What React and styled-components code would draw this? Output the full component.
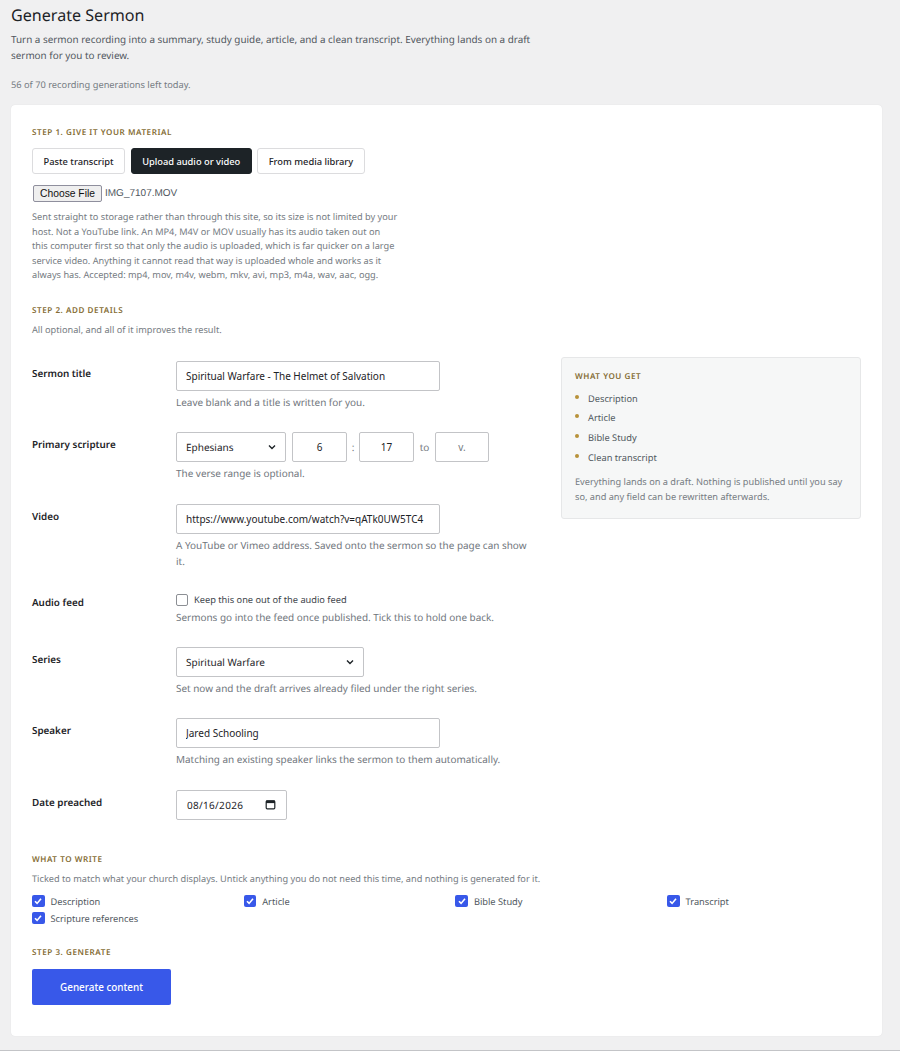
import React from "react";
import styled, { createGlobalStyle } from "styled-components";

const Global = createGlobalStyle`
  html, body { margin: 0; padding: 0; background: #f0f0f1; }
  body { font-family: "Noto Sans", "Open Sans", sans-serif; color: #1d2327; text-rendering: geometricPrecision; }
  * { box-sizing: border-box; }
`;
const Page = styled.div`
  height: 1051px; padding: 0 18px 0 11px; border-bottom: 1px solid #c3c4c7; overflow: hidden;
`;
const Title = styled.h1`
  margin: 0; padding-top: 3px; font-size: 16.1px; line-height: 24px; font-weight: 400; color: #1d2327;
`;
const Lead = styled.p`
  margin: 4px 0 0; width: 530px; font-size: 9.9px; line-height: 16px; color: #50575e;
`;
const Quota = styled.p`
  margin: 14px 0 0; font-size: 9.27px; line-height: 16px; color: #757b82;
`;
const Card = styled.main`
  margin-top: 12px; height: 931px; background: #fff; border-radius: 4px; padding: 22px 21px 0;
  box-shadow: 0 0 1px rgba(0,0,0,.12);
`;
const Eyebrow = styled.h2`
  margin: 0; font-size: 8.1px; line-height: 12px; font-weight: 600; letter-spacing: .55px;
  text-transform: uppercase; color: #856d35;
`;
const Tabs = styled.div`
  display: flex; gap: 5.5px; margin-top: 9px;
`;
const Tab = styled.button`
  height: 26px; padding: 0 10.5px; border-radius: 3px; font: 500 9.3px "Noto Sans", sans-serif;
  border: 1px solid ${p => (p.$active ? "#1d2327" : "#dcdcde")};
  background: ${p => (p.$active ? "#1d2327" : "#fff")};
  color: ${p => (p.$active ? "#fff" : "#1d2327")};
`;
const FileRow = styled.div`
  display: flex; align-items: center; gap: 3px; margin-top: 11px; font: 10px "Liberation Sans", sans-serif; color: #50575e;
`;
const ChooseButton = styled.button`
  height: 17px; width: 69px; padding: 0; margin-left: 1px; border: 1px solid #8f8f9d; border-radius: 2px; background: #efefef;
  font: 10.3px "Liberation Sans", sans-serif; color: #111;
`;
const Help = styled.p`
  margin: ${p => p.$mt || 4}px 0 0; width: ${p => p.$w || "auto"}; font-size: 9.2px; line-height: 14.6px; color: #757b82;
`;
const Section = styled.div`
  margin-top: ${p => p.$mt}px;
`;
const Columns = styled.div`
  display: grid; grid-template-columns: 497px 300px; column-gap: 32px; margin-top: 19px;
`;
const Fields = styled.div`
  display: flex; flex-direction: column; padding-top: 4px;
`;
const Row = styled.div`
  display: grid; grid-template-columns: 144px 1fr; min-height: ${p => p.$h}px;
`;
const Label = styled.label`
  font-size: 9.85px; line-height: 16px; font-weight: 600; color: #1d2327; padding-top: ${p => p.$pt ?? 4}px;
`;
const TextInput = styled.input`
  display: block; width: 264px; height: 30px; padding: 1px 9px 0; border: 1px solid #c3c4c7; border-radius: 2px;
  font: 10px "Noto Sans", sans-serif; color: #1d2327; background: #fff;
`;
const Hint = styled.p`
  margin: 3px 0 0; font-size: 9.95px; line-height: 16px; color: #6f757c;
`;
const ScriptureLine = styled.div`
  display: flex; align-items: center; height: 30px; font-size: 10px; color: #757b82;
`;
const SelectBox = styled.div`
  display: flex; align-items: center; justify-content: space-between; width: ${p => p.$w}px; height: 30px;
  padding: 0 8px 0 9px; border: 1px solid #c3c4c7; border-radius: 2px; font-size: 10px; color: #1d2327; background: #fff;
`;
const VerseInput = styled.input`
  width: ${p => p.$w || 55}px; height: 30px; margin-left: ${p => p.$ml || 0}px; border: 1px solid #c3c4c7; border-radius: 2px; text-align: center;
  font: 10px "Noto Sans", sans-serif; color: #1d2327; padding: 0;
  &::placeholder { color: #757b82; opacity: 1; }
`;
const Sep = styled.span`
  width: ${p => p.$w}px; text-align: center;
`;
const CheckLine = styled.label`
  display: flex; align-items: center; gap: 6px; height: 14px; margin: 1px 0 -1px; font-size: 9.25px; color: #3c434a;
`;
const EmptyBox = styled.span`
  width: 12px; height: 12px; border: 1px solid #8c8f94; border-radius: 2px; background: #fff;
`;
const DateBox = styled.div`
  display: flex; align-items: center; justify-content: space-between; width: 111px; height: 30px; padding: 0 10px;
  border: 1px solid #c3c4c7; border-radius: 2px; font-size: 10px; letter-spacing: .3px; color: #1d2327;
`;
const Aside = styled.aside`
  align-self: start; height: 162px; padding: 13px 13px; background: #f6f7f7;
  border: 1px solid #e6e7e8; border-radius: 3px;
`;
const AsideList = styled.ul`
  list-style: none; margin: 6px 0 0; padding: 0;
`;
const AsideItem = styled.li`
  position: relative; padding-left: 13px; height: 19.7px; font-size: 9.25px; line-height: 20px; color: #50575e;
  &::before { content: ""; position: absolute; left: 0; top: 6px; width: 4px; height: 4px; border-radius: 50%; background: #b8923a; }
`;
const AsideNote = styled.p`
  margin: 8px 0 0; font-size: 9.2px; line-height: 14.6px; color: #757b82;
`;
const OutputGrid = styled.div`
  display: grid; grid-template-columns: repeat(4, 211.7px); row-gap: 5px; margin-top: 9px;
`;
const OutputItem = styled.label`
  display: flex; align-items: center; gap: 6px; height: 12px; font-size: 9.25px; color: #50575e;
`;
const Tick = styled.span`
  display: inline-flex; align-items: center; justify-content: center; width: 12.5px; height: 12.5px; border-radius: 2px; background: #3858e9;
`;
const GenerateButton = styled.button`
  display: block; width: 139px; height: 36px; margin-top: 10px; border: 0; border-radius: 2px; background: #3858e9;
  color: #fff; font: 500 9.9px "Noto Sans", sans-serif;
`;

const CheckIcon = () => (
  <svg width="10" height="10" viewBox="0 0 10 10" fill="none"><path d="M2 5.2 4.1 7.4 8 2.8" stroke="#fff" strokeWidth="1.6" /></svg>
);
const Chevron = () => (
  <svg width="10" height="10" viewBox="0 0 10 10" fill="none"><path d="M2 3.6 5 6.6 8 3.6" stroke="#1d2327" strokeWidth="1.4" /></svg>
);

export default function App() {
  return (
    <>
      <Global />
      <Page>
        <Title>Generate Sermon</Title>
        <Lead>Turn a sermon recording into a summary, study guide, article, and a clean transcript. Everything lands on a draft sermon for you to review.</Lead>
        <Quota>56 of 70 recording generations left today.</Quota>
        <Card>
          <Eyebrow>Step 1. Give it your material</Eyebrow>
          <Tabs>
            <Tab>Paste transcript</Tab>
            <Tab $active>Upload audio or video</Tab>
            <Tab>From media library</Tab>
          </Tabs>
          <FileRow><ChooseButton>Choose File</ChooseButton>IMG_7107.MOV</FileRow>
          <Help $w="368px" $mt={8}>Sent straight to storage rather than through this site, so its size is not limited by your host. Not a YouTube link. An MP4, M4V or MOV usually has its audio taken out on<br />this computer first so that only the audio is uploaded, which is far quicker on a large service video. Anything it cannot read that way is uploaded whole and works as it always has. Accepted: mp4, mov, m4v, webm, mkv, avi, mp3, m4a, wav, aac, ogg.</Help>
          <Section $mt={22}>
            <Eyebrow>Step 2. Add details</Eyebrow>
            <Help $mt={6}>All optional, and all of it improves the result.</Help>
            <Columns>
              <Fields>
                <Row $h={71.5}>
                  <Label>Sermon title</Label>
                  <div><TextInput readOnly value="Spiritual Warfare - The Helmet of Salvation" /><Hint>Leave blank and a title is written for you.</Hint></div>
                </Row>
                <Row $h={71.5}>
                  <Label>Primary scripture</Label>
                  <div>
                    <ScriptureLine>
                      <SelectBox $w={110}>Ephesians<Chevron /></SelectBox>
                      <VerseInput $ml={6} readOnly value="6" />
                      <Sep $w={12}>:</Sep>
                      <VerseInput readOnly value="17" />
                      <Sep $w={21}>to</Sep>
                      <VerseInput $w={54} readOnly placeholder="v." />
                    </ScriptureLine>
                    <Hint>The verse range is optional.</Hint>
                  </div>
                </Row>
                <Row $h={88}>
                  <Label>Video</Label>
                  <div><TextInput readOnly value="https://www.youtube.com/watch?v=qATk0UW5TC4" /><Hint>A YouTube or Vimeo address. Saved onto the sermon so the page can show it.</Hint></div>
                </Row>
                <Row $h={55}>
                  <Label $pt={2}>Audio feed</Label>
                  <div><CheckLine><EmptyBox />Keep this one out of the audio feed</CheckLine><Hint>Sermons go into the feed once published. Tick this to hold one back.</Hint></div>
                </Row>
                <Row $h={71}>
                  <Label>Series</Label>
                  <div>
                    <SelectBox $w={188}>Spiritual Warfare<Chevron /></SelectBox>
                    <Hint>Set now and the draft arrives already filed under the right series.</Hint>
                  </div>
                </Row>
                <Row $h={72}>
                  <Label>Speaker</Label>
                  <div><TextInput readOnly value="Jared Schooling" /><Hint>Matching an existing speaker links the sermon to them automatically.</Hint></div>
                </Row>
                <Row $h={64}>
                  <Label>Date preached</Label>
                  <DateBox>08/16/2026
                    <svg width="11" height="11" viewBox="0 0 11 11" fill="none"><rect x="1.2" y="1.8" width="8.6" height="8" rx="1" stroke="#1d2327" strokeWidth="1.2" /><rect x="1" y="1.5" width="9" height="2.6" fill="#1d2327" /></svg>
                  </DateBox>
                </Row>
              </Fields>
              <Aside>
                <Eyebrow>What you get</Eyebrow>
                <AsideList>
                  <AsideItem>Description</AsideItem>
                  <AsideItem>Article</AsideItem>
                  <AsideItem>Bible Study</AsideItem>
                  <AsideItem>Clean transcript</AsideItem>
                </AsideList>
                <AsideNote>Everything lands on a draft. Nothing is published until you say so, and any field can be rewritten afterwards.</AsideNote>
              </Aside>
            </Columns>
          </Section>
          <Eyebrow>What to write</Eyebrow>
          <Help $mt={6}>Ticked to match what your church displays. Untick anything you do not need this time, and nothing is generated for it.</Help>
          <OutputGrid>
            {["Description", "Article", "Bible Study", "Transcript", "Scripture references"].map(t => (
              <OutputItem key={t}><Tick><CheckIcon /></Tick>{t}</OutputItem>
            ))}
          </OutputGrid>
          <Section $mt={23}>
            <Eyebrow>Step 3. Generate</Eyebrow>
            <GenerateButton>Generate content</GenerateButton>
          </Section>
        </Card>
      </Page>
    </>
  );
}
